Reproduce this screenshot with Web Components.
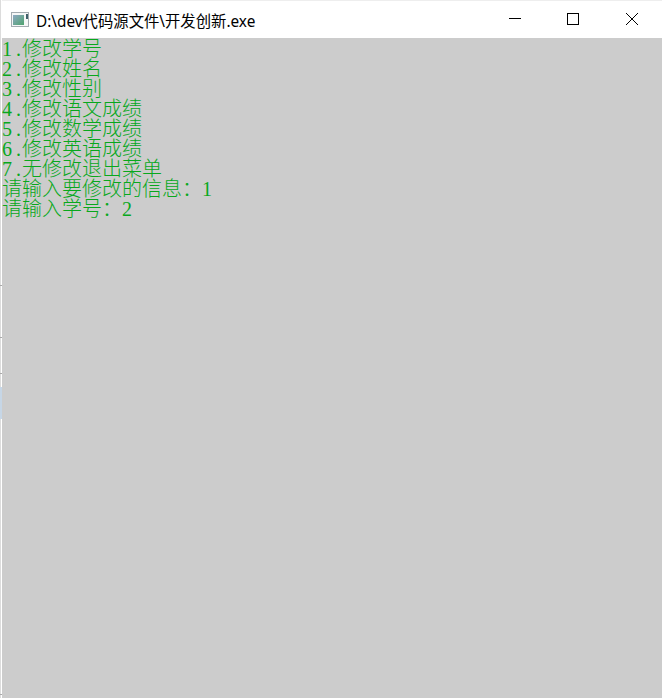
<!DOCTYPE html>
<html>
<head>
<meta charset="utf-8">
<style>
  html, body { margin: 0; height: 100%; background: #fff; overflow: hidden; }
</style>
</head>
<body>
<template id="tmpl-console">
  <style>
    :host { display: flex; width: 663px; height: 699px; box-sizing: border-box; background: #fff; padding: 0 1px 1px 0; }
    .edge { width: 2px; flex: none; background:
      linear-gradient(#aaa, #aaa) 0 285px / 2px 1px no-repeat,
      linear-gradient(#aaa, #aaa) 0 337px / 2px 1px no-repeat,
      linear-gradient(#aaa, #aaa) 0 373px / 2px 1px no-repeat,
      linear-gradient(#c6d6e6, #c6d6e6) 0 387px / 2px 32px no-repeat,
      linear-gradient(#aaa, #aaa) 0 694px / 2px 1px no-repeat,
      linear-gradient(90deg, #dcdcdc 1px, #fff 1px); }
    .main { flex: 1; display: flex; flex-direction: column; min-width: 0; border-top: 1px solid #eee; }
    .body { flex: 1; background: #ccc; overflow: hidden; }
  </style>
  <div class="edge"></div>
  <div class="main">
    <slot name="bar"></slot>
    <div class="body"><slot></slot></div>
  </div>
</template>

<template id="tmpl-bar">
  <style>
    :host { display: flex; align-items: center; height: 37px; padding-right: 1px; background: #fff; color: #000; font: 15.35px "Noto Sans", "Noto Sans CJK SC", sans-serif; }
    .ico { margin: 0 7px 0 9px; flex: none; display: block; }
    .title { flex: 1; white-space: nowrap; }
    .btn { width: 58px; height: 36px; padding-bottom: 1px; display: flex; align-items: center; justify-content: center; flex: none; }
    .btn svg { display: block; }
    .last { margin-left: 1px; }
  </style>
  <svg class="ico" width="18" height="15" viewBox="0 0 18 15">
    <defs>
      <linearGradient id="g" x1="0" y1="0" x2="1" y2="1">
        <stop offset="0" stop-color="#8fa9c4"/>
        <stop offset="1" stop-color="#4fa36e"/>
      </linearGradient>
    </defs>
    <rect x=".5" y=".5" width="17" height="14" fill="#f6f7f7" stroke="#a3abb0"/>
    <rect x="2" y="3" width="11" height="10" fill="url(#g)"/>
    <rect x="15" y="2" width="2" height="5" fill="#3f5f6a"/>
  </svg>
  <div class="title"><slot></slot></div>
  <div class="btn"><svg width="12" height="12"><path d="M0 5.5H12" stroke="#000" fill="none"/></svg></div>
  <div class="btn"><svg width="12" height="12"><rect x=".5" y=".5" width="11" height="11" stroke="#000" fill="none"/></svg></div>
  <div class="btn last"><svg width="12" height="12"><path d="M0 0L12 12M12 0L0 12" stroke="#000" fill="none"/></svg></div>
</template>

<template id="tmpl-line">
  <style>
    :host { display: block; height: 20px; line-height: 20px; font-size: 20px; color: #08a81c; white-space: nowrap; font-family: "Liberation Serif", "Noto Sans CJK SC", serif; }
    .n { display: inline-block; width: 10px; text-align: center; }
    .d { width: 6px; padding-left: 4px; text-align: left; }
    .t { font-family: "Noto Sans CJK SC", serif; font-weight: 300; }
  </style>
  <span class="n" id="n"></span><span class="n d" id="d"></span><span class="t"><slot></slot></span><span class="n" id="v"></span>
</template>

<win-console>
  <title-bar slot="bar">D:\dev代码源文件\开发创新.exe</title-bar>
  <con-line n="1">修改学号</con-line>
  <con-line n="2">修改姓名</con-line>
  <con-line n="3">修改性别</con-line>
  <con-line n="4">修改语文成绩</con-line>
  <con-line n="5">修改数学成绩</con-line>
  <con-line n="6">修改英语成绩</con-line>
  <con-line n="7">无修改退出菜单</con-line>
  <con-line v="1">请输入要修改的信息：</con-line>
  <con-line v="2">请输入学号：</con-line>
</win-console>

<script>
function fromTemplate(el, id) {
  el.attachShadow({mode: 'open'}).append(document.getElementById(id).content.cloneNode(true));
}
customElements.define('win-console', class extends HTMLElement {
  connectedCallback() { fromTemplate(this, 'tmpl-console'); }
});
customElements.define('title-bar', class extends HTMLElement {
  connectedCallback() { fromTemplate(this, 'tmpl-bar'); }
});
customElements.define('con-line', class extends HTMLElement {
  connectedCallback() {
    fromTemplate(this, 'tmpl-line');
    const s = this.shadowRoot, n = this.getAttribute('n'), v = this.getAttribute('v');
    if (n) { s.getElementById('n').textContent = n; s.getElementById('d').textContent = '.'; }
    else { s.getElementById('n').remove(); s.getElementById('d').remove(); }
    if (v) s.getElementById('v').textContent = v; else s.getElementById('v').remove();
  }
});
</script>
</body>
</html>
